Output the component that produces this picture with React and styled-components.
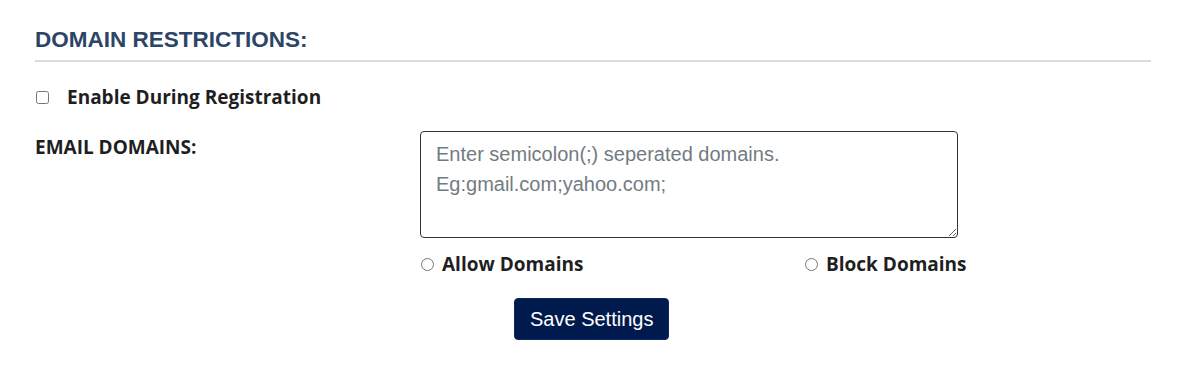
import React from 'react';
import styled, { createGlobalStyle } from 'styled-components';

const GlobalStyle = createGlobalStyle`
  html, body {
    margin: 0;
    padding: 0;
    background: #ffffff;
  }
`;

const Page = styled.div`
  padding: 27px 44px 30px 35px;
  font-family: "Open Sans", "Liberation Sans", sans-serif;
  color: #1f1f1f;
`;

const Heading = styled.h2`
  margin: 0;
  padding-bottom: 7px;
  border-bottom: 2px solid #dcdcdc;
  font-family: "Liberation Sans", Arial, sans-serif;
  font-size: 22.5px;
  font-weight: bold;
  color: #2c4566;
`;

const CheckRow = styled.label`
  display: flex;
  align-items: center;
  margin-top: 22px;
  font-size: 19px;
  font-weight: 700;
`;

const Check = styled.input`
  width: 13px;
  height: 13px;
  margin: 0 18px 0 1px;
`;

const FieldRow = styled.div`
  display: grid;
  grid-template-columns: 385px 538px;
  margin-top: 21px;
`;

const FieldLabel = styled.div`
  font-size: 19px;
  font-weight: 700;
  padding-top: 3px;
`;

const Area = styled.textarea`
  box-sizing: border-box;
  width: 538px;
  height: 107px;
  padding: 7px 15px;
  border: 1px solid #333;
  border-radius: 4px;
  font-family: "Liberation Sans", Arial, sans-serif;
  font-size: 20px;
  line-height: 30px;
  resize: vertical;
  display: block;

  &::placeholder {
    color: #737b82;
  }
`;

const RadioRow = styled.div`
  display: grid;
  grid-template-columns: 384px auto;
  margin-top: 13px;
  width: 560px;
`;

const RadioLabel = styled.label`
  display: flex;
  align-items: center;
  font-size: 19px;
  font-weight: 700;
  white-space: nowrap;
`;

const Radio = styled.input`
  width: 13px;
  height: 13px;
  margin: 0 8px 0 1px;
`;

const SaveButton = styled.button`
  margin: 21px 0 0 94px;
  height: 42px;
  padding: 0 15px;
  background: #011a4e;
  color: #ffffff;
  border: 1px solid #0a2a60;
  border-radius: 4px;
  font-family: "Liberation Sans", Arial, sans-serif;
  font-size: 20px;
`;

export default function App() {
  return (
    <>
      <GlobalStyle />
      <Page>
        <Heading>DOMAIN RESTRICTIONS:</Heading>
        <CheckRow>
          <Check type="checkbox" />
          Enable During Registration
        </CheckRow>
        <FieldRow>
          <FieldLabel>EMAIL DOMAINS:</FieldLabel>
          <div>
            <Area placeholder={'Enter semicolon(;) seperated domains.\nEg:gmail.com;yahoo.com;'} />
            <RadioRow>
              <RadioLabel>
                <Radio type="radio" name="mode" />
                Allow Domains
              </RadioLabel>
              <RadioLabel>
                <Radio type="radio" name="mode" />
                Block Domains
              </RadioLabel>
            </RadioRow>
            <SaveButton>Save Settings</SaveButton>
          </div>
        </FieldRow>
      </Page>
    </>
  );
}
